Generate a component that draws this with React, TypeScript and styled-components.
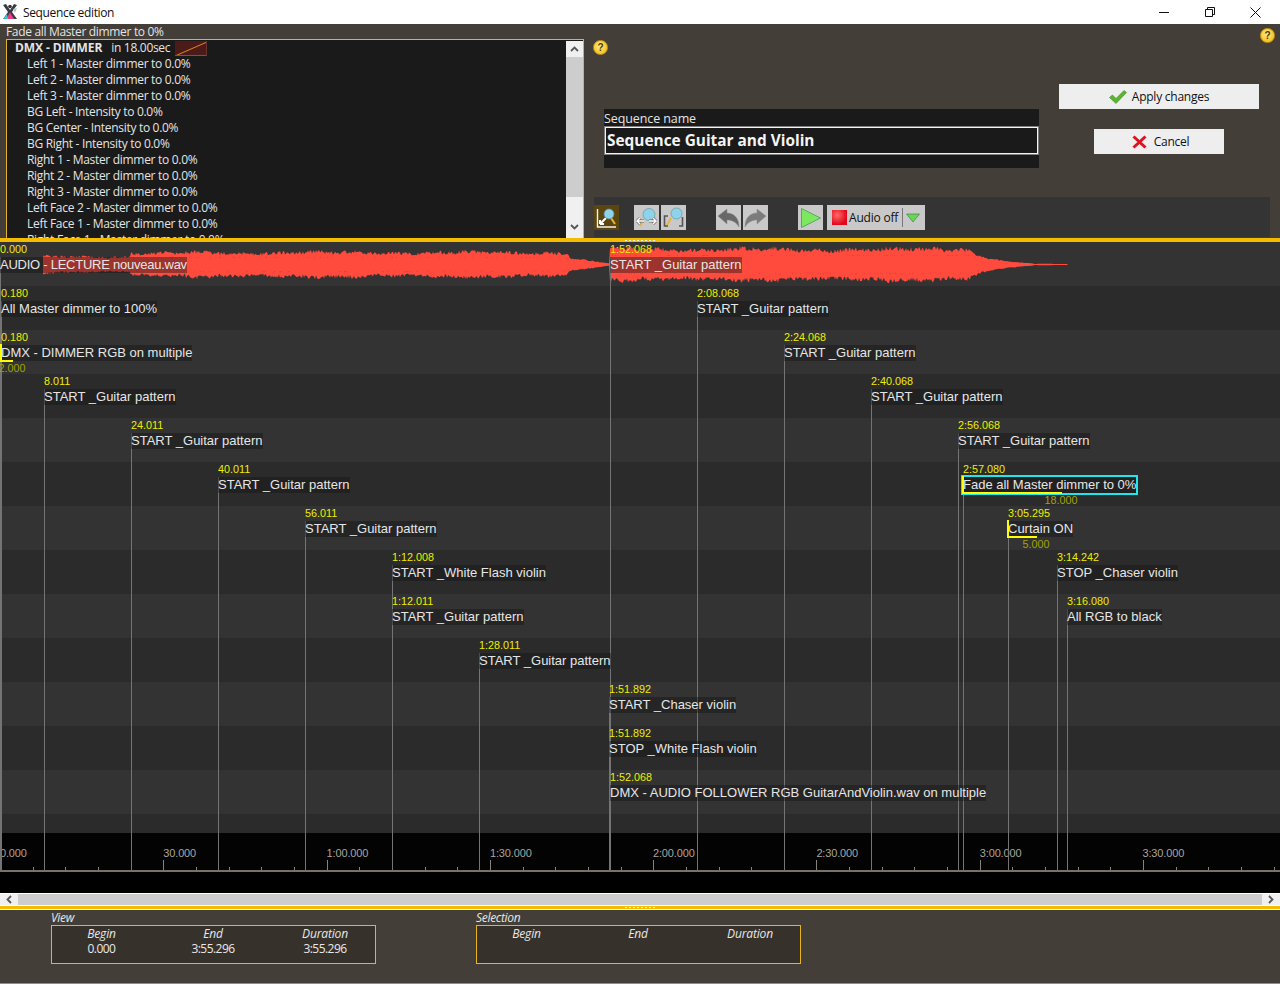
import React from "react";
import styled, { createGlobalStyle } from "styled-components";

const UI_FONT = `"Open Sans", "Noto Sans", sans-serif`;
const TL_FONT = `"Liberation Sans", Arial, sans-serif`;
const ROW_H = 44;

interface TimelineEvent {
  x: number;
  row: number;
  time: string;
  label: string;
  bar?: number;
  duration?: string;
  selected?: boolean;
  tight?: boolean;
}

const listRows = [
  "Left 1 - Master dimmer to 0.0%",
  "Left 2 - Master dimmer to 0.0%",
  "Left 3 - Master dimmer to 0.0%",
  "BG Left - Intensity to 0.0%",
  "BG Center - Intensity to 0.0%",
  "BG Right - Intensity to 0.0%",
  "Right 1 - Master dimmer to 0.0%",
  "Right 2 - Master dimmer to 0.0%",
  "Right 3 - Master dimmer to 0.0%",
  "Left Face 2 - Master dimmer to 0.0%",
  "Left Face 1 - Master dimmer to 0.0%",
  "Right Face 1 - Master dimmer to 0.0%",
];

const events: TimelineEvent[] = [
  { x: 0, row: 0, time: "0.000", label: "AUDIO - LECTURE nouveau.wav", tight: true },
  { x: 610, row: 0, time: "1:52.068", label: "START _Guitar pattern" },
  { x: 1, row: 1, time: "0.180", label: "All Master dimmer to 100%" },
  { x: 697, row: 1, time: "2:08.068", label: "START _Guitar pattern" },
  { x: 1, row: 2, time: "0.180", label: "DMX - DIMMER RGB on multiple", bar: 11, duration: "2.000" },
  { x: 784, row: 2, time: "2:24.068", label: "START _Guitar pattern" },
  { x: 44, row: 3, time: "8.011", label: "START _Guitar pattern" },
  { x: 871, row: 3, time: "2:40.068", label: "START _Guitar pattern" },
  { x: 131, row: 4, time: "24.011", label: "START _Guitar pattern" },
  { x: 958, row: 4, time: "2:56.068", label: "START _Guitar pattern" },
  { x: 218, row: 5, time: "40.011", label: "START _Guitar pattern" },
  { x: 963, row: 5, time: "2:57.080", label: "Fade all Master dimmer to 0%", bar: 98, duration: "18.000", selected: true },
  { x: 305, row: 6, time: "56.011", label: "START _Guitar pattern" },
  { x: 1008, row: 6, time: "3:05.295", label: "Curtain ON", bar: 28, duration: "5.000" },
  { x: 392, row: 7, time: "1:12.008", label: "START _White Flash violin" },
  { x: 1057, row: 7, time: "3:14.242", label: "STOP _Chaser violin" },
  { x: 392, row: 8, time: "1:12.011", label: "START _Guitar pattern" },
  { x: 1067, row: 8, time: "3:16.080", label: "All RGB to black" },
  { x: 479, row: 9, time: "1:28.011", label: "START _Guitar pattern" },
  { x: 609, row: 10, time: "1:51.892", label: "START _Chaser violin" },
  { x: 609, row: 11, time: "1:51.892", label: "STOP _White Flash violin" },
  { x: 610, row: 12, time: "1:52.068", label: "DMX - AUDIO FOLLOWER RGB GuitarAndViolin.wav on multiple" },
];

const rulerLabels = [
  { x: 163.3, text: "30.000" },
  { x: 326.6, text: "1:00.000" },
  { x: 490, text: "1:30.000" },
  { x: 653, text: "2:00.000" },
  { x: 816.4, text: "2:30.000" },
  { x: 979.8, text: "3:00.000" },
  { x: 1142.5, text: "3:30.000" },
];

// amplitude of the audio track, in px, for a column of the timeline
const envelope = (x: number): number => {
  if (x < 43) return 0;
  if (x < 131) return 7.5;
  if (x < 186) return 10.5;
  if (x < 566) return 11.5;
  if (x < 571) return 11.5 - (x - 566) * 1.1;
  if (x < 610) return 6 - ((x - 571) / 39) * 5;
  if (x < 970) return 14.5;
  if (x < 990) return 13 - ((x - 970) / 20) * 7;
  if (x < 1007) return 6 - ((x - 990) / 17) * 3;
  if (x < 1034) return 3 - ((x - 1007) / 27) * 2;
  if (x < 1068) return 0.6;
  return 0;
};

const buildWave = () => {
  let seed = 7;
  const rnd = () => {
    seed = (seed * 1103 + 12345) % 65536;
    return seed / 65536;
  };
  const top: string[] = [];
  const bottom: string[] = [];
  let flecks = "";
  for (let x = 43; x <= 1068; x++) {
    const env = envelope(x);
    const noisy = env > 2 ? 0.2 : 0;
    const slow = 1 + 0.07 * Math.sin(x / 23) + 0.05 * Math.sin(x / 6.1);
    const up = env * slow * (1 + noisy * (rnd() - 0.45) * 1.6);
    const down = env * slow * (1 + noisy * (rnd() - 0.45) * 1.6);
    top.push(`${x},${(22.5 - up).toFixed(1)}`);
    bottom.unshift(`${x},${(22.5 + down).toFixed(1)}`);
    if (env > 9 && rnd() > 0.72) {
      const side = rnd() > 0.5 ? 1 : -1;
      flecks += `M${x} ${(22.5 + side * env * 0.62).toFixed(1)}h1`;
    }
  }
  return { outline: [...top, ...bottom].join(" "), flecks };
};

const buildTicks = () => {
  let d = "";
  for (let i = 1; i * 32.66 < 1280; i++) {
    const x = Math.round(i * 32.66) + 0.5;
    d += `M${x} ${i % 5 === 0 ? 27 : 34}V37`;
  }
  return d;
};

const GlobalStyle = createGlobalStyle`
  html, body {
    margin: 0;
    padding: 0;
    background: #000;
  }
`;

const Page = styled.div`
  width: 1280px;
  height: 984px;
  display: flex;
  flex-direction: column;
  overflow: hidden;
  font-family: ${UI_FONT};
  font-size: 12px;
`;

const TitleBar = styled.div`
  height: 24px;
  display: flex;
  align-items: center;
  background: #fff;
  color: #111;
  padding-left: 2px;
`;

const AppTitle = styled.span`
  margin-left: 5px;
  font-size: 12px;
  letter-spacing: -0.35px;
`;

const WindowControls = styled.div`
  margin-left: auto;
  padding-right: 2px;
  display: flex;
`;

const WindowButton = styled.div`
  width: 45.5px;
  height: 24px;
  display: flex;
  align-items: center;
  justify-content: center;
  color: #111;
`;

const TopPanel = styled.div`
  position: relative;
  height: 214px;
  display: flex;
  background: #433e37;
  color: #e4e4e4;
`;

const ListColumn = styled.div`
  width: 584px;
  padding-left: 6px;
  box-sizing: border-box;
`;

const ListCaption = styled.div`
  height: 15px;
  line-height: 15px;
  font-size: 12px;
  letter-spacing: -0.33px;
`;

const ListBox = styled.div`
  height: 199px;
  box-sizing: border-box;
  border: 1px solid #e3b12a;
  border-bottom: none;
  background: #1a1a1a;
  display: flex;
  overflow: hidden;
`;

const ListContent = styled.div`
  flex: 1;
  overflow: hidden;
`;

const ListHeader = styled.div`
  height: 16px;
  display: flex;
  align-items: center;
  padding-left: 8px;
  line-height: 16px;
`;

const HeaderName = styled.b`
  font-weight: 700;
  letter-spacing: -0.1px;
`;

const HeaderDelay = styled.span`
  margin-left: 9px;
  margin-right: 5px;
  letter-spacing: -0.3px;
`;

const ListRow = styled.div`
  height: 16px;
  line-height: 16px;
  padding-left: 20px;
  letter-spacing: -0.3px;
  white-space: nowrap;
`;

const VScroll = styled.div`
  width: 17px;
  background: #f0f0f0;
  display: flex;
  flex-direction: column;
  margin-top: 1px;
`;

const VScrollButton = styled.div`
  height: 16px;
  display: flex;
  align-items: center;
  justify-content: center;
  color: #555;
`;

const VScrollThumb = styled.div`
  height: 140px;
  background: #cdcdcd;
`;

const VScrollFoot = styled(VScrollButton)`
  margin-top: auto;
  height: 22px;
`;

const HelpBadge = styled.div<{ $left: number; $top: number }>`
  position: absolute;
  left: ${(p) => p.$left}px;
  top: ${(p) => p.$top}px;
  width: 13px;
  height: 13px;
  border-radius: 50%;
  background: radial-gradient(circle at 45% 40%, #ffe98a, #f6c21c 75%);
  border: 1px solid #c79a12;
  color: #4a3a08;
  font: 700 10px/13px ${TL_FONT};
  text-align: center;
`;

const RightColumn = styled.div`
  flex: 1;
  display: flex;
  flex-direction: column;
`;

const FormArea = styled.div`
  height: 173px;
  display: flex;
  padding-left: 20px;
`;

const NameBlock = styled.div`
  margin-top: 85px;
  width: 435px;
  height: 59px;
  background: #1a1a1a;
  box-sizing: border-box;
  padding-top: 2px;
`;

const NameLabel = styled.div`
  height: 15px;
  line-height: 15px;
  font-size: 12.5px;
  letter-spacing: -0.1px;
`;

const NameInput = styled.div`
  height: 29px;
  box-sizing: border-box;
  border: 1px solid #7d7d7d;
  box-shadow: inset 0 0 0 1px #f4f4f4;
  padding-left: 2px;
  font-size: 15.4px;
  font-weight: 700;
  line-height: 27px;
  color: #f4f4f4;
`;

const Actions = styled.div`
  margin-left: 20px;
  margin-top: 60px;
  width: 200px;
  display: flex;
  flex-direction: column;
  align-items: center;
`;

const ActionButton = styled.div<{ $width: number; $top: number; $iconGap: number; $pad: number }>`
  width: ${(p) => p.$width}px;
  height: 25px;
  margin-top: ${(p) => p.$top}px;
  padding-left: ${(p) => p.$pad}px;
  box-sizing: border-box;
  background: #eeeeee;
  color: #111;
  display: flex;
  align-items: center;
  justify-content: center;
  gap: ${(p) => p.$iconGap}px;
  font-size: 12px;
  letter-spacing: -0.25px;
`;

const Toolbar = styled.div`
  margin-left: 10px;
  width: 676px;
  height: 40px;
  background: #343434;
  display: flex;
  padding-top: 8px;
  box-sizing: border-box;
`;

const ToolButton = styled.div<{ $ml?: number; $active?: boolean }>`
  width: 25px;
  height: 25px;
  margin-left: ${(p) => p.$ml ?? 0}px;
  background: ${(p) => (p.$active ? "#5c4610" : "#c9c9c9")};
  display: flex;
  align-items: center;
  justify-content: center;
`;

const AudioButton = styled.div`
  margin-left: 4px;
  width: 98px;
  height: 25px;
  background: #c9c9c9;
  color: #111;
  display: flex;
  align-items: center;
  padding-left: 5px;
  box-sizing: border-box;
  font-size: 12px;
  letter-spacing: -0.2px;
`;

const AudioLed = styled.span`
  width: 15px;
  height: 15px;
  margin-right: 2px;
  background: radial-gradient(circle at 35% 35%, #ff6a6a, #e3061a 70%);
`;

const AudioDivider = styled.span`
  width: 1px;
  height: 19px;
  margin: 0 3px 0 4px;
  background: #777;
`;

const Splitter = styled.div<{ $height: number }>`
  position: relative;
  height: ${(p) => p.$height}px;
  background: #f5bb00;
`;

const SplitterDots = styled.div<{ $top: number }>`
  position: absolute;
  left: 625px;
  top: ${(p) => p.$top}px;
  width: 30px;
  height: 1px;
  background: repeating-linear-gradient(90deg, #fff 0 2px, transparent 2px 4px);
`;

const Timeline = styled.div`
  position: relative;
  font-family: ${TL_FONT};
`;

const Track = styled.div<{ $odd: boolean; $short?: boolean }>`
  height: ${(p) => (p.$short ? 19 : ROW_H)}px;
  background: ${(p) => (p.$odd ? "#2b2b2b" : "#333333")};
`;

const Wave = styled.svg`
  display: block;
`;

const Ruler = styled.div`
  position: relative;
  height: 39px;
  background: #030303;
`;

const RulerLine = styled.div`
  position: absolute;
  left: 0;
  right: 0;
  top: 37px;
  height: 2px;
  background: #7b7267;
`;

const RulerTicks = styled.svg`
  position: absolute;
  left: 0;
  top: 0;
`;

const RulerLabel = styled.span<{ $x: number }>`
  position: absolute;
  left: ${(p) => p.$x}px;
  top: 13px;
  line-height: 14px;
  font-size: 11px;
  letter-spacing: -0.15px;
  color: #aaa59c;
`;

const EventLayer = styled.div`
  position: absolute;
  left: 0;
  top: 0;
  width: 1280px;
  height: 628px;
  overflow: hidden;
`;

const Stem = styled.div<{ $x: number; $row: number }>`
  position: absolute;
  left: ${(p) => p.$x}px;
  top: ${(p) => p.$row * ROW_H + 15}px;
  bottom: 0;
  width: 1px;
  background: #747474;
`;

const EventBlock = styled.div<{ $x: number; $row: number }>`
  position: absolute;
  left: ${(p) => p.$x}px;
  top: ${(p) => p.$row * ROW_H}px;
  white-space: nowrap;
`;

const EventTime = styled.div`
  height: 14px;
  line-height: 14px;
  font-size: 10.8px;
  color: #eded00;
`;

const EventLabel = styled.div<{ $selected?: boolean; $tight?: boolean }>`
  position: relative;
  width: fit-content;
  margin-top: 1px;
  height: 16px;
  line-height: 15px;
  font-size: 13px;
  letter-spacing: ${(p) => (p.$tight ? "-0.25px" : "0")};
  color: #e6e6e6;
  background: rgba(20, 20, 20, 0.42);
  ${(p) => p.$selected && "outline: 2px solid #1fe6ec;"}
`;

const DurationBar = styled.div<{ $width: number }>`
  position: absolute;
  left: -1px;
  top: -1px;
  bottom: -1px;
  width: ${(p) => p.$width}px;
  border-left: 2px solid #ffff00;
  border-bottom: 2px solid #ffff00;
`;

const DurationText = styled.span<{ $x: number }>`
  position: absolute;
  left: ${(p) => p.$x}px;
  top: 17px;
  line-height: 13px;
  font-size: 10.8px;
  color: #a3a300;
  transform: translateX(-50%);
`;

const BlackGap = styled.div`
  height: 21px;
  background: #000;
`;

const HScroll = styled.div`
  height: 11px;
  border-top: 1px solid #fff;
  border-bottom: 1px solid #fff;
  background: #cdcdcd;
  display: flex;
  justify-content: space-between;
`;

const HScrollButton = styled.div`
  width: 18px;
  background: #f0f0f0;
  display: flex;
  align-items: center;
  justify-content: center;
  color: #555;
`;

const BottomPanel = styled.div`
  flex: 1;
  display: flex;
  gap: 100px;
  padding-left: 51px;
  background: #433e37;
  border-top: 1px solid #fff;
  border-bottom: 1px solid #8d8d8d;
  color: #e8e8e8;
`;

const RangeGroup = styled.div`
  width: 325px;
`;

const RangeTitle = styled.div`
  height: 15px;
  line-height: 16px;
  font-style: italic;
  font-size: 12px;
  letter-spacing: -0.3px;
`;

const RangeBox = styled.div`
  height: 39px;
  box-sizing: border-box;
  border: 1px solid #e8b41c;
  background: #36322b;
  display: grid;
  grid-template-columns: 99px 124px 100px;
  grid-template-rows: 15px 15px;
  text-align: center;
  line-height: 15px;
`;

const RangeHead = styled.div`
  font-style: italic;
  letter-spacing: -0.15px;
`;

const RangeValue = styled.div`
  letter-spacing: -0.55px;
`;

const AppLogo = () => (
  <svg width="16" height="18" viewBox="0 0 16 18">
    <path d="M1 2 L4 1 L8 7 L12 1 L15 2 L10 9 L15 16 L11 16 L8 12 L5 16 L1 16 L6 9Z" fill="#3a3a44" />
    <path d="M4 16 L8 9.5 L12 16Z" fill="#f0398c" />
    <path d="M1 16 L5 11 L6 16Z" fill="#35c6c9" />
    <path d="M11 6 L15 5 L13 10Z" fill="#b9c4c9" />
    <circle cx="8" cy="3.5" r="1.8" fill="#333" />
  </svg>
);

const CurveBox = () => (
  <svg width="32" height="15" viewBox="0 0 32 15">
    <rect width="32" height="15" fill="#4a1b18" />
    <path d="M0 15 L32 1" stroke="#e08a1c" strokeWidth="1" fill="none" />
    <path d="M0 14.5H32" stroke="#8b4a42" strokeWidth="1" />
    <path d="M31.5 0V15" stroke="#6b332e" strokeWidth="1" />
  </svg>
);

const ChevronUp = () => (
  <svg width="9" height="6" viewBox="0 0 9 6">
    <path d="M1 5 L4.5 1.5 L8 5" stroke="currentColor" strokeWidth="1.8" fill="none" />
  </svg>
);

const ChevronDown = () => (
  <svg width="9" height="6" viewBox="0 0 9 6">
    <path d="M1 1 L4.5 4.5 L8 1" stroke="currentColor" strokeWidth="1.8" fill="none" />
  </svg>
);

const CheckIcon = () => (
  <svg width="18" height="14" viewBox="0 0 18 14">
    <path d="M0.5 7.5 L3.5 5 L7 8.5 L15 0.5 L17.5 2.5 L7 13.5Z" fill="#5cb531" stroke="#3f8d22" strokeWidth="0.6" />
  </svg>
);

const CrossIcon = () => (
  <svg width="15" height="14" viewBox="0 0 15 14">
    <path d="M1.5 1.5 L13.5 12.5 M13.5 1.5 L1.5 12.5" stroke="#e2101f" strokeWidth="3" fill="none" />
  </svg>
);

const ZoomFitIcon = () => (
  <svg width="23" height="22" viewBox="0 0 23 22">
    <path d="M2.5 2V20H21" stroke="#f5f2e8" strokeWidth="1.4" fill="none" />
    <path d="M5 17 L11 11 M5 17V13 M5 17H9" stroke="#fff" strokeWidth="2" fill="none" />
    <path d="M16 11 L20 17" stroke="#e8b33c" strokeWidth="2" />
    <circle cx="14" cy="7" r="5" fill="#8fd3ea" stroke="#5a8a9a" strokeWidth="0.7" />
  </svg>
);

const ZoomAllIcon = () => (
  <svg width="23" height="22" viewBox="0 0 23 22">
    <circle cx="14" cy="7.5" r="6" fill="#8fd3ea" stroke="#6b9cab" strokeWidth="0.8" />
    <path d="M8 12 L5 19" stroke="#e8b33c" strokeWidth="2" />
    <path d="M2 14H9 M2 14 L5 11 M2 14 L5 17 M14 14H21 M21 14 L18 11 M21 14 L18 17" stroke="#6f6f6f" strokeWidth="2.8" fill="none" />
    <path d="M2 14H9 M2 14 L5 11 M2 14 L5 17 M14 14H21 M21 14 L18 11 M21 14 L18 17" stroke="#fff" strokeWidth="1.4" fill="none" />
  </svg>
);

const ZoomSelectionIcon = () => (
  <svg width="23" height="22" viewBox="0 0 23 22">
    <circle cx="14.5" cy="6.5" r="5.5" fill="#8fd3ea" stroke="#6b9cab" strokeWidth="0.8" />
    <path d="M9 11 L4 20" stroke="#e8b33c" strokeWidth="2" />
    <path d="M6 9H2.5V19H6" stroke="#555" strokeWidth="1.6" fill="none" />
    <path d="M17 19H20.5V10" stroke="#555" strokeWidth="1.6" fill="none" />
  </svg>
);

const UndoIcon = ({ flip }: { flip?: boolean }) => (
  <svg width="23" height="20" viewBox="0 0 23 20" style={flip ? { transform: "scaleX(-1)" } : undefined}>
    <path
      d="M1 8 L10 1 V5 C17 5 22 10 22 19 C19 14 15 12 10 12 V16Z"
      fill={flip ? "#7c7c7c" : "#686868"}
      stroke="#8f8f8f"
      strokeWidth="0.5"
    />
  </svg>
);

const PlayIcon = () => (
  <svg width="22" height="22" viewBox="0 0 22 22">
    <path d="M1.5 1.5 L20.5 11 L1.5 20.5Z" fill="#7ce85f" stroke="#59a86a" strokeWidth="1" />
  </svg>
);

const DropArrow = () => (
  <svg width="14" height="10" viewBox="0 0 14 10">
    <path d="M0.5 1H13.5L7 9Z" fill="#6cd455" stroke="#4a8f5a" strokeWidth="0.8" />
  </svg>
);

const RangeFields = ({ begin, end, duration }: { begin?: string; end?: string; duration?: string }) => (
  <RangeBox>
    <RangeHead>Begin</RangeHead>
    <RangeHead>End</RangeHead>
    <RangeHead>Duration</RangeHead>
    <RangeValue>{begin}</RangeValue>
    <RangeValue>{end}</RangeValue>
    <RangeValue>{duration}</RangeValue>
  </RangeBox>
);

const App: React.FC = (): JSX.Element => {
  const wave = buildWave();
  const ticks = buildTicks();

  return (
    <Page>
      <GlobalStyle />
      <TitleBar>
        <AppLogo />
        <AppTitle>Sequence edition</AppTitle>
        <WindowControls>
          <WindowButton>
            <svg width="10" height="10" viewBox="0 0 10 10">
              <path d="M0 5.5H10" stroke="#111" />
            </svg>
          </WindowButton>
          <WindowButton>
            <svg width="10" height="10" viewBox="0 0 10 10">
              <path d="M0.5 2.5H7.5V9.5H0.5Z M2.5 2.5V0.5H9.5V7.5H7.5" stroke="#111" fill="none" />
            </svg>
          </WindowButton>
          <WindowButton>
            <svg width="11" height="11" viewBox="0 0 11 11">
              <path d="M0.5 0.5L10.5 10.5M10.5 0.5L0.5 10.5" stroke="#111" />
            </svg>
          </WindowButton>
        </WindowControls>
      </TitleBar>

      <TopPanel>
        <ListColumn>
          <ListCaption>Fade all Master dimmer to 0%</ListCaption>
          <ListBox>
            <ListContent>
              <ListHeader>
                <HeaderName>DMX - DIMMER</HeaderName>
                <HeaderDelay>in 18.00sec</HeaderDelay>
                <CurveBox />
              </ListHeader>
              {listRows.map((row) => (
                <ListRow key={row}>{row}</ListRow>
              ))}
            </ListContent>
            <VScroll>
              <VScrollButton>
                <ChevronUp />
              </VScrollButton>
              <VScrollThumb />
              <VScrollFoot>
                <ChevronDown />
              </VScrollFoot>
            </VScroll>
          </ListBox>
        </ListColumn>
        <HelpBadge $left={593} $top={16}>?</HelpBadge>
        <HelpBadge $left={1260} $top={4}>?</HelpBadge>
        <RightColumn>
          <FormArea>
            <NameBlock>
              <NameLabel>Sequence name</NameLabel>
              <NameInput>Sequence Guitar and Violin</NameInput>
            </NameBlock>
            <Actions>
              <ActionButton $width={200} $top={0} $iconGap={5} $pad={0}>
                <CheckIcon />
                Apply changes
              </ActionButton>
              <ActionButton $width={130} $top={20} $iconGap={7} $pad={3}>
                <CrossIcon />
                Cancel
              </ActionButton>
            </Actions>
          </FormArea>
          <Toolbar>
            <ToolButton $active>
              <ZoomFitIcon />
            </ToolButton>
            <ToolButton $ml={15}>
              <ZoomAllIcon />
            </ToolButton>
            <ToolButton $ml={2}>
              <ZoomSelectionIcon />
            </ToolButton>
            <ToolButton $ml={30}>
              <UndoIcon />
            </ToolButton>
            <ToolButton $ml={2}>
              <UndoIcon flip />
            </ToolButton>
            <ToolButton $ml={30}>
              <PlayIcon />
            </ToolButton>
            <AudioButton>
              <AudioLed />
              Audio off
              <AudioDivider />
              <DropArrow />
            </AudioButton>
          </Toolbar>
        </RightColumn>
      </TopPanel>

      <Splitter $height={4}>
        <SplitterDots $top={2} />
      </Splitter>

      <Timeline>
        <Track $odd={false}>
          <Wave width="1280" height="44" viewBox="0 0 1280 44">
            <polygon points={wave.outline} fill="#ff4b3e" />
            <path d={wave.flecks} stroke="#d8473c" strokeWidth="1" fill="none" />
          </Wave>
        </Track>
        {Array.from({ length: 12 }, (_, i) => (
          <Track key={i} $odd={i % 2 === 0} />
        ))}
        <Track $odd $short />
        <Ruler>
          <RulerTicks width="1280" height="37" viewBox="0 0 1280 37">
            <path d={ticks} stroke="#8a8276" strokeWidth="1" fill="none" />
          </RulerTicks>
          <RulerLine />
          <RulerLabel $x={0}>0.000</RulerLabel>
          {rulerLabels.map((l) => (
            <RulerLabel key={l.text} $x={l.x}>
              {l.text}
            </RulerLabel>
          ))}
        </Ruler>
        <EventLayer>
          {events.map((e) => (
            <Stem key={`stem-${e.time}-${e.row}`} $x={e.x} $row={e.row} />
          ))}
          {events.map((e) => (
            <EventBlock key={`${e.time}-${e.row}`} $x={e.x} $row={e.row}>
              <EventTime>{e.time}</EventTime>
              <EventLabel $selected={e.selected} $tight={e.tight}>
                {e.label}
                {e.bar && <DurationBar $width={e.bar} />}
                {e.duration && <DurationText $x={e.bar as number}>{e.duration}</DurationText>}
              </EventLabel>
            </EventBlock>
          ))}
        </EventLayer>
      </Timeline>

      <BlackGap />
      <HScroll>
        <HScrollButton>
          <svg width="6" height="9" viewBox="0 0 6 9">
            <path d="M5 1 L1.5 4.5 L5 8" stroke="currentColor" strokeWidth="1.8" fill="none" />
          </svg>
        </HScrollButton>
        <HScrollButton>
          <svg width="6" height="9" viewBox="0 0 6 9">
            <path d="M1 1 L4.5 4.5 L1 8" stroke="currentColor" strokeWidth="1.8" fill="none" />
          </svg>
        </HScrollButton>
      </HScroll>
      <Splitter $height={3}>
        <SplitterDots $top={1} />
      </Splitter>

      <BottomPanel>
        <RangeGroup>
          <RangeTitle>View</RangeTitle>
          <RangeFields begin="0.000" end="3:55.296" duration="3:55.296" />
        </RangeGroup>
        <RangeGroup>
          <RangeTitle>Selection</RangeTitle>
          <RangeFields />
        </RangeGroup>
      </BottomPanel>
    </Page>
  );
};

export default App;
